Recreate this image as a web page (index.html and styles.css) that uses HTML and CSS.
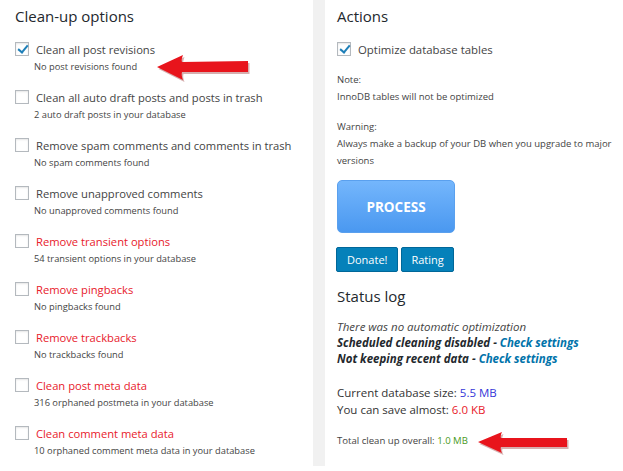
FILE: index.html
```html
<!DOCTYPE html>
<html>
<head>
<meta charset="utf-8">
<link rel="stylesheet" href="styles.css">
</head>
<body>
<div class="page">
  <section class="col left">
    <h2 class="title">Clean-up options</h2>
    <div class="opt">
      <div class="line"><span class="cb checked"></span><span class="lbl">Clean all post revisions</span></div>
      <div class="desc">No post revisions found</div>
    </div>
    <div class="opt">
      <div class="line"><span class="cb"></span><span class="lbl">Clean all auto draft posts and posts in trash</span></div>
      <div class="desc">2 auto draft posts in your database</div>
    </div>
    <div class="opt">
      <div class="line"><span class="cb"></span><span class="lbl">Remove spam comments and comments in trash</span></div>
      <div class="desc">No spam comments found</div>
    </div>
    <div class="opt">
      <div class="line"><span class="cb"></span><span class="lbl">Remove unapproved comments</span></div>
      <div class="desc">No unapproved comments found</div>
    </div>
    <div class="opt">
      <div class="line"><span class="cb"></span><span class="lbl red">Remove transient options</span></div>
      <div class="desc">54 transient options in your database</div>
    </div>
    <div class="opt">
      <div class="line"><span class="cb"></span><span class="lbl red">Remove pingbacks</span></div>
      <div class="desc">No pingbacks found</div>
    </div>
    <div class="opt">
      <div class="line"><span class="cb"></span><span class="lbl red">Remove trackbacks</span></div>
      <div class="desc">No trackbacks found</div>
    </div>
    <div class="opt">
      <div class="line"><span class="cb"></span><span class="lbl red">Clean post meta data</span></div>
      <div class="desc">316 orphaned postmeta in your database</div>
    </div>
    <div class="opt">
      <div class="line"><span class="cb"></span><span class="lbl red">Clean comment meta data</span></div>
      <div class="desc">10 orphaned comment meta data in your database</div>
    </div>
  </section>
  <div class="sep"></div>
  <section class="col right">
    <h2 class="title">Actions</h2>
    <div class="line"><span class="cb checked"></span><span class="lbl">Optimize database tables</span></div>
    <div class="note">
      <div>Note:</div>
      <div>InnoDB tables will not be optimized</div>
    </div>
    <div class="note">
      <div>Warning:</div>
      <div>Always make a backup of your DB when you upgrade to major versions</div>
    </div>
    <button class="process">PROCESS</button>
    <div class="btns">
      <button class="btn">Donate!</button>
      <button class="btn">Rating</button>
    </div>
    <h2 class="title status">Status log</h2>
    <div class="log">
      <div class="it">There was no automatic optimization</div>
      <div class="bi">Scheduled cleaning disabled - <span class="link">Check settings</span></div>
      <div class="bi">Not keeping recent data - <span class="link">Check settings</span></div>
    </div>
    <div class="sizes">
      <div>Current database size: <span class="blue">5.5 MB</span></div>
      <div>You can save almost: <span class="redv">6.0 KB</span></div>
    </div>
    <div class="total">Total clean up overall: <span class="green">1.0 MB</span></div>
  </section>
</div>
<svg class="arrow a1" width="100" height="30" viewBox="0 0 100 30">
  <path d="M2 13 L28 1 Q26 6 27 8 L93 7 L93 18 L27 18 Q26 21 28 26 Z" fill="#8a1a1a" opacity="0.35" transform="translate(1.5,2)"/>
  <path d="M2 13 L28 1 Q26 6 27 8 L93 7 L93 18 L27 18 Q26 21 28 26 Z" fill="#e8141c"/>
</svg>
<svg class="arrow a2" width="100" height="30" viewBox="0 0 100 30">
  <path d="M2 12 L26 2 Q24 6 25 8 L91 8 L91 17 L25 17 Q24 19 26 23 Z" fill="#8a1a1a" opacity="0.35" transform="translate(1.5,2)"/>
  <path d="M2 12 L26 2 Q24 6 25 8 L91 8 L91 17 L25 17 Q24 19 26 23 Z" fill="#e8141c"/>
</svg>
</body>
</html>
```
FILE: styles.css
```css
html, body {
  margin: 0;
  padding: 0;
  background: #fff;
}
body {
  font-family: "Open Sans", "Noto Sans", sans-serif;
  color: #444;
  width: 623px;
  height: 471px;
  overflow: hidden;
  position: relative;
}
.page {
  display: flex;
  height: 471px;
}
.col {
  box-sizing: border-box;
}
.left {
  width: 313px;
  padding: 4px 0 0 15px;
}
.sep {
  width: 12px;
  background: #f1f1f1;
  height: 466px;
}
.right {
  flex: 1;
  padding: 4px 8px 0 12px;
}
.title {
  margin: 0;
  font-size: 15px;
  font-weight: 400;
  line-height: 24px;
  color: #23282d;
}
.opt {
  margin-top: 11px;
}
.opt + .opt {
  margin-top: 12px;
}
.line {
  display: flex;
  align-items: center;
  height: 20px;
}
.right .line {
  margin-top: 11px;
}
.cb {
  box-sizing: border-box;
  width: 14px;
  height: 14px;
  border: 1px solid #b4b9be;
  box-shadow: inset 0 1px 2px rgba(0,0,0,0.1);
  background: #fff;
  margin-right: 7px;
  position: relative;
  flex: none;
}
.cb.checked::after {
  content: "";
  position: absolute;
  left: 4px;
  top: 0px;
  width: 4px;
  height: 8px;
  border: solid #1e7fb8;
  border-width: 0 2px 2px 0;
  transform: rotate(40deg);
}
.lbl {
  font-size: 11.2px;
  color: #444;
}
.right .lbl {
  font-size: 11.4px;
}
.lbl.red {
  color: #e8202b;
}
.desc {
  font-size: 9.3px;
  line-height: 16px;
  padding-left: 19px;
  color: #444;
}
.note {
  font-size: 9.5px;
  line-height: 17px;
  color: #444;
  margin-top: 12px;
}
.note + .note {
  margin-top: 13px;
}
.process {
  display: block;
  margin-top: 11px;
  width: 118px;
  height: 53px;
  border: 1px solid #5aa0ee;
  border-radius: 5px;
  background: linear-gradient(#74b6fc, #4a98f0);
  color: #fff;
  font-family: inherit;
  font-weight: 700;
  font-size: 13.5px;
  padding: 0;
}
.btns {
  display: flex;
  gap: 3px;
  margin-top: 14px;
  margin-left: -1px;
}
.btn {
  height: 25px;
  border: 1px solid #006799;
  border-radius: 2px;
  background: #0581ba;
  color: #fff;
  font-family: inherit;
  font-size: 11px;
  padding: 0 10px;
}
.btn + .btn {
  padding: 0 9px;
}
.status {
  margin-top: 12px;
}
.log {
  margin-top: 11px;
  font-size: 11.5px;
  line-height: 16px;
  color: #444;
}
.it {
  font-style: italic;
}
.bi {
  font-style: italic;
  font-weight: 700;
  color: #23282d;
}
.link {
  color: #0073aa;
}
.sizes {
  margin-top: 17px;
  font-size: 11.5px;
  line-height: 17px;
  color: #333;
}
.blue { color: #3535d8; }
.redv { color: #e8202b; }
.total {
  margin-top: 15px;
  font-size: 9.6px;
  line-height: 16px;
  color: #444;
}
.green { color: #4a9a1c; }
.arrow {
  position: absolute;
}
.a1 {
  left: 155px;
  top: 54px;
}
.a2 {
  left: 476px;
  top: 430px;
}
```
